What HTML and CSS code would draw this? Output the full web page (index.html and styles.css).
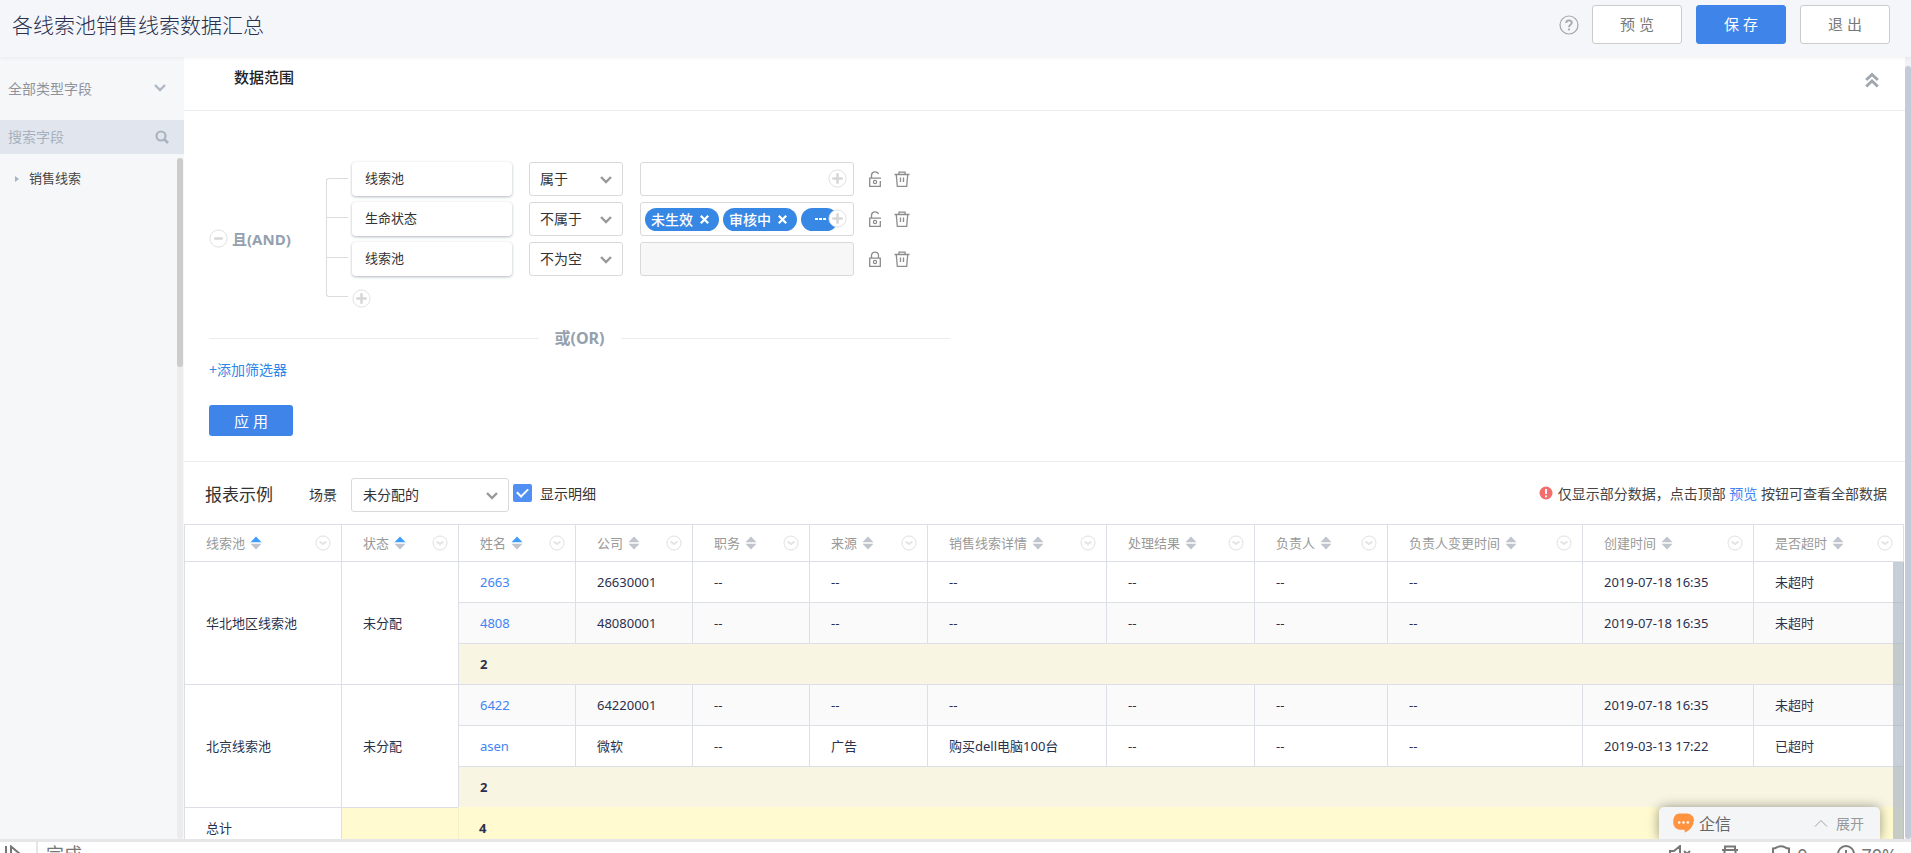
FILE: index.html
```html
<!DOCTYPE html>
<html lang="zh-CN">
<head>
<meta charset="utf-8">
<title>各线索池销售线索数据汇总</title>
<link rel="stylesheet" href="styles.css">
</head>
<body>
<svg class="defs" aria-hidden="true">
  <symbol id="chevron" viewBox="0 0 14 10"><path d="M2 2l5 5 5-5" fill="none" stroke="currentColor" stroke-width="2.400"/></symbol>
  <symbol id="plus" viewBox="0 0 20 20"><circle cx="10" cy="10" r="9" fill="#fff" stroke="#dedede"/><path d="M10 4.500v11M4.500 10h11" stroke="#d6d6d6" stroke-width="2.600"/></symbol>
  <symbol id="minus" viewBox="0 0 20 20"><circle cx="10" cy="10" r="9" fill="#fff" stroke="#dedede"/><path d="M5.500 10h9" stroke="#d6d6d6" stroke-width="2.600"/></symbol>
  <symbol id="unlock" viewBox="0 0 14 16"><path d="M3.500 7V4.500C3.500 0 9.500-.2 10.400 3.200M13 7.200H1.700v8.100H12.300V10" fill="none" stroke="currentColor" stroke-width="1.300"/><circle cx="7" cy="11" r="1.600" fill="none" stroke="currentColor" stroke-width="1.200"/></symbol>
  <symbol id="lock" viewBox="0 0 14 16"><path d="M3.500 7V4.500C3.500 0 10.500 0 10.500 4.500V7M1.700 15.300V7.200h10.600v8.100z" fill="none" stroke="currentColor" stroke-width="1.300"/><circle cx="7" cy="11" r="1.600" fill="none" stroke="currentColor" stroke-width="1.200"/></symbol>
  <symbol id="trash" viewBox="0 0 16 16"><path d="M.5 3.500h15M5 3.300V1.200h6v2.100M2.300 3.700l1 11.600h9.400l1-11.600M6.500 6.500v4.500M9.500 6.500v4.500" fill="none" stroke="currentColor" stroke-width="1.300"/></symbol>
  <symbol id="sort" viewBox="0 0 12 14"><path class="up" d="M6 .5l5.500 5.700H.5z"/><path class="down" d="M6 13.500L.5 7.800h11z"/></symbol>
  <symbol id="drop" viewBox="0 0 16 16"><circle cx="8" cy="8" r="7" fill="none" stroke="#e0e0e0"/><path d="M4.500 6.500L8 9l3.500-2.500" fill="none" stroke="#e4e4e4" stroke-width="2"/></symbol>
</svg>

<header class="topbar">
  <h1 class="title">各线索池销售线索数据汇总</h1>
  <svg class="help" viewBox="0 0 20 20" aria-hidden="true"><circle cx="10" cy="10" r="9" fill="none" stroke="#a6a6a6" stroke-width="1.200"/><path d="M7.200 8c0-3.600 5.600-3.400 5.600-.3 0 2-2.800 2-2.800 4.500" fill="none" stroke="#a6a6a6" stroke-width="1.800"/><circle cx="10" cy="14.500" r="1.100" fill="#a6a6a6"/></svg>
  <button class="btn">预 览</button>
  <button class="btn btn-primary">保 存</button>
  <button class="btn">退 出</button>
</header>

<div class="workspace">
  <aside class="sidebar">
    <button class="type-picker"><span>全部类型字段</span><svg class="chev"><use href="#chevron"/></svg></button>
    <div class="search">
      <input class="search-input" type="text" placeholder="搜索字段" aria-label="搜索字段">
      <svg class="search-icon" viewBox="0 0 14 14" aria-hidden="true"><circle cx="6" cy="6" r="4.500" fill="none" stroke="#a9b4c0" stroke-width="2.200"/><path d="M9.500 9.500L13 13" stroke="#a9b4c0" stroke-width="2.600"/></svg>
    </div>
    <div class="tree">
      <button class="tree-item"><i class="caret"></i>销售线索</button>
      <div class="tree-track"><div class="tree-thumb"></div></div>
    </div>
  </aside>

  <main class="main">
    <section class="range-head">
      <h2 class="range-title">数据范围</h2>
      <button class="collapse" aria-label="收起"><svg viewBox="0 0 14 16"><path d="M1.200 8L7 2.500 12.800 8M1.200 14.500L7 9l5.800 5.500" fill="none" stroke="#9fa8b0" stroke-width="2.900"/></svg></button>
    </section>

    <section class="filters">
      <div class="group">
        <div class="logic"><svg class="round"><use href="#minus"/></svg><span>且(AND)</span></div>
        <div class="bracket"><i class="branch"></i><i class="branch branch-low"></i></div>
        <div class="rules">
          <div class="rule">
            <div class="field">线索池</div>
            <div class="pick op"><select aria-label="条件一"><option>属于</option></select><svg class="chev"><use href="#chevron"/></svg></div>
            <div class="value"><input type="text" aria-label="值一"><button class="add" aria-label="选择"><svg><use href="#plus"/></svg></button></div>
            <button class="tool" aria-label="锁定"><svg class="lock"><use href="#unlock"/></svg></button>
            <button class="tool" aria-label="删除"><svg class="bin"><use href="#trash"/></svg></button>
          </div>
          <div class="rule">
            <div class="field">生命状态</div>
            <div class="pick op"><select aria-label="条件二"><option>不属于</option></select><svg class="chev"><use href="#chevron"/></svg></div>
            <div class="value">
              <span class="tag">未生效<svg class="x" viewBox="0 0 8 8"><path d="M.7.7l6.600 6.600M7.300.7L.7 7.300"/></svg></span>
              <span class="tag">审核中<svg class="x" viewBox="0 0 8 8"><path d="M.7.7l6.600 6.600M7.300.7L.7 7.300"/></svg></span>
              <span class="tag tag-more"><svg class="more" viewBox="0 0 12 4"><path d="M0 1h3v2H0zM4 1h3v2H4zM8 1h3v2H8z" fill="#fff"/></svg></span>
              <button class="add" aria-label="选择"><svg><use href="#plus"/></svg></button>
            </div>
            <button class="tool" aria-label="锁定"><svg class="lock"><use href="#unlock"/></svg></button>
            <button class="tool" aria-label="删除"><svg class="bin"><use href="#trash"/></svg></button>
          </div>
          <div class="rule">
            <div class="field">线索池</div>
            <div class="pick op"><select aria-label="条件三"><option>不为空</option></select><svg class="chev"><use href="#chevron"/></svg></div>
            <div class="value value-off"><input type="text" aria-label="值三" disabled></div>
            <button class="tool" aria-label="解锁"><svg class="lock"><use href="#lock"/></svg></button>
            <button class="tool" aria-label="删除"><svg class="bin"><use href="#trash"/></svg></button>
          </div>
          <button class="add-rule" aria-label="添加条件"><svg><use href="#plus"/></svg></button>
        </div>
      </div>
      <div class="or">或(OR)</div>
      <a class="add-filter" href="#">+添加筛选器</a>
      <button class="apply">应 用</button>
    </section>

    <section class="report-bar">
      <h2 class="report-title">报表示例</h2>
      <label class="scene-label" for="scene">场景</label>
      <div class="pick scene"><select id="scene"><option>未分配的</option></select><svg class="chev"><use href="#chevron"/></svg></div>
      <label class="detail"><input type="checkbox" checked><span>显示明细</span></label>
      <p class="note"><svg viewBox="0 0 14 14" aria-hidden="true"><circle cx="7" cy="7" r="6.500" fill="#f56c6c"/><path d="M7 3v5M7 9.500v1.800" stroke="#fff" stroke-width="1.900"/></svg>仅显示部分数据，点击顶部 <a href="#">预览</a> 按钮可查看全部数据</p>
    </section>

    <div class="table-wrap">
      <table class="grid">
        <colgroup><col class="w157"><col class="w117"><col class="w117"><col class="w117"><col class="w117"><col class="w118"><col class="w179"><col class="w148"><col class="w133"><col class="w195"><col class="w171"><col></colgroup>
        <thead>
          <tr>
            <th><div class="th">线索池<svg class="sort on"><use href="#sort"/></svg><svg class="drop"><use href="#drop"/></svg></div></th>
            <th><div class="th">状态<svg class="sort on"><use href="#sort"/></svg><svg class="drop"><use href="#drop"/></svg></div></th>
            <th><div class="th">姓名<svg class="sort on"><use href="#sort"/></svg><svg class="drop"><use href="#drop"/></svg></div></th>
            <th><div class="th">公司<svg class="sort"><use href="#sort"/></svg><svg class="drop"><use href="#drop"/></svg></div></th>
            <th><div class="th">职务<svg class="sort"><use href="#sort"/></svg><svg class="drop"><use href="#drop"/></svg></div></th>
            <th><div class="th">来源<svg class="sort"><use href="#sort"/></svg><svg class="drop"><use href="#drop"/></svg></div></th>
            <th><div class="th">销售线索详情<svg class="sort"><use href="#sort"/></svg><svg class="drop"><use href="#drop"/></svg></div></th>
            <th><div class="th">处理结果<svg class="sort"><use href="#sort"/></svg><svg class="drop"><use href="#drop"/></svg></div></th>
            <th><div class="th">负责人<svg class="sort"><use href="#sort"/></svg><svg class="drop"><use href="#drop"/></svg></div></th>
            <th><div class="th">负责人变更时间<svg class="sort"><use href="#sort"/></svg><svg class="drop"><use href="#drop"/></svg></div></th>
            <th><div class="th">创建时间<svg class="sort"><use href="#sort"/></svg><svg class="drop"><use href="#drop"/></svg></div></th>
            <th><div class="th">是否超时<svg class="sort"><use href="#sort"/></svg><svg class="drop"><use href="#drop"/></svg></div></th>
          </tr>
        </thead>
        <tbody>
          <tr><td class="pool" rowspan="3">华北地区线索池</td><td class="pool" rowspan="3">未分配</td><td><a href="#">2663</a></td><td>26630001</td><td>--</td><td>--</td><td>--</td><td>--</td><td>--</td><td>--</td><td>2019-07-18 16:35</td><td>未超时</td></tr>
          <tr class="alt"><td><a href="#">4808</a></td><td>48080001</td><td>--</td><td>--</td><td>--</td><td>--</td><td>--</td><td>--</td><td>2019-07-18 16:35</td><td>未超时</td></tr>
          <tr class="subtotal"><td colspan="10">2</td></tr>
          <tr class="alt"><td class="pool" rowspan="3">北京线索池</td><td class="pool" rowspan="3">未分配</td><td><a href="#">6422</a></td><td>64220001</td><td>--</td><td>--</td><td>--</td><td>--</td><td>--</td><td>--</td><td>2019-07-18 16:35</td><td>未超时</td></tr>
          <tr><td><a href="#">asen</a></td><td>微软</td><td>--</td><td>广告</td><td>购买dell电脑100台</td><td>--</td><td>--</td><td>--</td><td>2019-03-13 17:22</td><td>已超时</td></tr>
          <tr class="subtotal"><td colspan="10">2</td></tr>
          <tr class="total"><td class="pool">总计</td><td class="blank"></td><td class="sum" colspan="10">4</td></tr>
        </tbody>
      </table>
      <div class="table-scroll"></div>
    </div>
  </main>
  <div class="page-scroll"><div class="page-thumb"></div></div>

  <button class="chat">
    <svg class="bubble" viewBox="0 0 22 20" aria-hidden="true"><path d="M7 0h8a7 7 0 0 1 6.500 9.200C20.500 14 18 17.500 12.500 20l-.5-3H7A7 7 0 0 1 .3 9.500C0 4 2.500 0 7 0z" fill="#ff9340"/><circle cx="6.500" cy="9.500" r="1.300" fill="#fff"/><circle cx="11" cy="9.500" r="1.300" fill="#fff"/><circle cx="15.500" cy="9.500" r="1.300" fill="#fff"/></svg>
    <span class="chat-name">企信</span>
    <svg class="chat-arrow" viewBox="0 0 14 8" aria-hidden="true"><path d="M1 7.500l6-6 6 6" fill="none" stroke="#a0a0a0"/></svg>
    <span>展开</span>
  </button>
</div>

<footer class="status">
  <svg class="s-play" viewBox="0 0 16 18" aria-hidden="true"><path d="M1 1v16M6 1.500v15L15 9z" fill="none" stroke="#777" stroke-width="2"/></svg>
  <span class="s-text">完成</span>
  <svg class="s-sound" viewBox="0 0 24 18" aria-hidden="true"><path d="M1 6h4l6-5v16l-6-5H1zM15 6l6 6M21 6l-6 6" fill="none" stroke="#777" stroke-width="2"/></svg>
  <svg class="s-bin" viewBox="0 0 18 18" aria-hidden="true"><path d="M1 5h16M4 5V1.500h10V5M3.500 5v12h11V5" fill="none" stroke="#777" stroke-width="2"/></svg>
  <svg class="s-shield" viewBox="0 0 18 18" aria-hidden="true"><path d="M1 3.500c4-.3 4-2.300 8-2.300s4 2 8 2.300v6.500c0 4-5 6-8 7-3-1-8-3-8-7z" fill="none" stroke="#777" stroke-width="2"/></svg>
  <span class="s-num">0</span>
  <svg class="s-zoom" viewBox="0 0 20 18" aria-hidden="true"><circle cx="9" cy="9" r="8" fill="none" stroke="#777" stroke-width="2"/><path d="M9 5v8M5 9h8" stroke="#777" stroke-width="2"/></svg>
  <span class="s-num">70%</span>
</footer>
</body>
</html>
```

FILE: styles.css
```css
* { box-sizing: border-box; }
body {
  margin: 0;
  height: 100vh;
  display: flex;
  flex-direction: column;
  overflow: hidden;
  background: #fff;
  color: #333;
  font-family: "Noto Sans", "Noto Sans CJK SC", sans-serif;
  font-size: 14px;
  font-weight: 400;
}
h1, h2, p { margin: 0; }
button, input, select { font: inherit; color: inherit; margin: 0; }
button { border: 0; padding: 0; background: none; cursor: pointer; }
a { color: #3e84e9; text-decoration: none; }
svg { display: block; flex: none; }
.defs { position: absolute; width: 0; height: 0; }

.topbar {
  flex: none;
  display: flex;
  align-items: flex-start;
  height: 57px;
  padding: 5px 21px 0 12px;
  background: #f4f6fa;
  box-shadow: 0 1px 4px rgba(0, 0, 0, .06);
  position: relative;
  z-index: 1;
}
.title { flex: 1; font-size: 21px; line-height: 40px; font-weight: 300; color: #2a304d; }
.help { width: 20px; height: 20px; margin: 10px 13px 0 0; }
.btn {
  width: 90px;
  height: 39px;
  padding-bottom: 2px;
  border: 1px solid #ccc;
  border-radius: 3px;
  background: #fff;
  color: #777;
  font-size: 15px;
}
.btn + .btn { margin-left: 14px; }
.btn-primary, .apply { background: #3e84e9; border-color: #3e84e9; color: #fff; }

.workspace { flex: 1; min-height: 0; display: flex; position: relative; overflow: hidden; }

.sidebar { flex: none; width: 184px; display: flex; flex-direction: column; background: #f6f7f9; }
.type-picker {
  display: flex;
  align-items: center;
  justify-content: space-between;
  height: 63px;
  padding: 0 17px 2px 8px;
  color: #8f949c;
}
.chev { width: 14px; height: 10px; color: #999; }
.type-picker .chev { color: #aeb8c2; }
.search { display: flex; align-items: center; height: 34px; padding: 0 15px 0 8px; background: #e1e6ee; }
.search-input { flex: 1; min-width: 0; border: 0; padding: 0 0 1px; background: none; outline: 0; }
.search-input::placeholder { color: #a6b1bd; }
.search-icon { width: 14px; height: 14px; }
.tree { flex: 1; position: relative; padding-top: 11px; }
.tree-item { display: flex; align-items: center; height: 24px; padding-left: 15px; font-size: 13px; color: #444; }
.caret { margin: 3px 10px 0 0; border: 3px solid transparent; border-left: 4px solid #a9b4c0; border-right: 0; }
.tree-track { position: absolute; top: 4px; right: 1px; bottom: 0; width: 6px; border-radius: 3px; background: #ececec; }
.tree-thumb { height: 209px; border-radius: 3px; background: #ccc; }

.main { flex: 1; min-width: 0; display: flex; flex-direction: column; }
.range-head {
  flex: none;
  display: flex;
  justify-content: space-between;
  align-items: flex-start;
  height: 54px;
  padding: 9px 26px 0 50px;
  border-bottom: 1px solid #eaecee;
}
.range-title { font-size: 15px; line-height: 22px; font-weight: 500; color: #222; }
.collapse { margin-top: 6px; }
.collapse svg { width: 14px; height: 16px; }

.filters {
  flex: none;
  display: flex;
  flex-direction: column;
  align-items: flex-start;
  padding: 51px 25px 25px;
  border-bottom: 1px solid #eaecee;
}
.group { display: flex; padding-bottom: 10px; }
.logic {
  display: flex;
  align-items: center;
  gap: 4px;
  width: 117px;
  padding-top: 7px;
  color: #94a0ae;
  font-size: 15px;
  font-weight: 700;
}
.round, .add svg, .add-rule svg { width: 19px; height: 19px; }
.bracket {
  width: 22px;
  height: 119px;
  margin: 16px 4px 0 0;
  border: 1px solid #dcdcdc;
  border-right: 0;
  border-radius: 3px 0 0 3px;
}
.branch { display: block; height: 39px; border-bottom: 1px solid #dcdcdc; }
.branch-low { height: 40px; }
.rules { display: flex; flex-direction: column; align-items: flex-start; gap: 6px; }
.rule { display: flex; align-items: center; height: 34px; }
.field {
  width: 160px;
  height: 34px;
  padding-left: 13px;
  border-radius: 4px;
  line-height: 32px;
  font-size: 13px;
  box-shadow: 0 1px 3px rgba(60, 80, 100, .4);
}
.pick { position: relative; height: 34px; }
.pick select {
  width: 100%;
  height: 100%;
  padding: 0 10px 1px;
  border: 1px solid #d9d9d9;
  border-radius: 3px;
  background: #fff;
  appearance: none;
}
.pick .chev { position: absolute; top: 13px; right: 10px; pointer-events: none; }
.op { width: 94px; margin-left: 17px; }
.value {
  position: relative;
  display: flex;
  align-items: center;
  gap: 4px;
  width: 214px;
  height: 34px;
  margin: 0 14px 0 17px;
  padding: 0 4px;
  border: 1px solid #d9d9d9;
  border-radius: 3px;
}
.value input { width: 100%; border: 0; padding: 0; background: none; outline: 0; }
.value-off { background: #f7f7f7; }
.add { position: absolute; top: 6px; right: 6px; }
.tag {
  display: flex;
  align-items: center;
  gap: 7px;
  height: 23px;
  padding: 0 10px 0 6px;
  border-radius: 12px;
  background: #3787e4;
  color: #fff;
  font-weight: 500;
  line-height: 23px;
}
.tag-more { padding: 0 11px 0 14px; }
.x { width: 9px; height: 9px; fill: none; stroke: #fff; stroke-width: 2; }
.more { width: 12px; height: 4px; }
.tool { width: 16px; color: #8c8c8c; }
.tool + .tool { margin-left: 10px; }
.lock { width: 14px; height: 16px; }
.bin { width: 16px; height: 16px; }
.add-rule { margin-top: 7px; }
.or {
  display: flex;
  align-items: center;
  gap: 16px;
  width: 741px;
  margin-top: 9px;
  color: #94a0ae;
  font-size: 16px;
  line-height: 22px;
  font-weight: 700;
}
.or::before, .or::after { content: ""; flex: 1; height: 1px; background: #ebecee; }
.add-filter { margin-top: 10px; line-height: 22px; color: #2f87e8; }
.apply { width: 84px; height: 31px; margin-top: 24px; border-radius: 3px; font-size: 15px; }

.report-bar { flex: none; display: flex; align-items: center; height: 62px; padding: 3px 18px 0 21px; }
.report-title { width: 104px; padding-bottom: 2px; font-size: 17px; font-weight: 400; }
.scene-label { width: 42px; padding-bottom: 2px; }
.scene { width: 158px; margin-right: 4px; }
.scene select { padding-left: 11px; }
.detail { display: flex; align-items: center; gap: 8px; margin-bottom: 4px; }
.detail input {
  appearance: none;
  width: 19px;
  height: 18px;
  border-radius: 2px;
  background: #4f90f2;
  display: grid;
  place-items: center;
}
.detail input::before {
  content: "";
  width: 9px;
  height: 5px;
  margin-bottom: 3px;
  border: solid #fff;
  border-width: 0 0 2px 2px;
  rotate: -45deg;
}
.note { display: flex; align-items: center; margin-left: auto; padding-bottom: 3px; white-space: pre; color: #444; }
.note svg { width: 14px; height: 14px; margin-right: 5px; }
.note a { color: #4285f4; }

.table-wrap { flex: 1; min-height: 0; position: relative; overflow: hidden; padding-right: 1px; }
.grid {
  width: 100%;
  table-layout: fixed;
  border-collapse: separate;
  border-spacing: 0;
  border-right: 1px solid #dcdfe6;
  font-size: 13px;
  color: #2a304d;
}
.w117 { width: 117px; }
.w118 { width: 118px; }
.w133 { width: 133px; }
.w148 { width: 148px; }
.w157 { width: 157px; }
.w171 { width: 171px; }
.w179 { width: 179px; }
.w195 { width: 195px; }
.grid th, .grid td {
  height: 41px;
  padding: 0 0 0 21px;
  border: solid #dcdfe6;
  border-width: 1px 0 0 1px;
  text-align: left;
  line-height: 20px;
  white-space: nowrap;
}
.grid th { height: 37px; font-weight: 400; color: #999; }
.th { display: flex; align-items: center; padding-right: 10px; }
.sort { width: 12px; height: 14px; margin-left: 5px; fill: #c0c4cc; --up: #c0c4cc; }
.sort.on { --up: #409eff; }
.up { fill: var(--up); }
.drop { width: 16px; height: 16px; margin-left: auto; }
.grid a { color: #4285f4; }
.alt td { background: #fafafa; }
.alt td.pool, td.pool { background: #fff; }
.grid .subtotal td { background: #f8f5e2; font-weight: 700; }
.total td { background: #fffad0; }
.grid .total td.pool { background: #fff; }
.grid .total td.sum { border-top-color: #fffad0; border-left-color: #f5f0c8; font-weight: 700; padding-left: 20px; }
.table-scroll { position: absolute; top: 38px; right: 1px; bottom: 0; width: 11px; background: rgba(160, 174, 190, .6); }
.page-scroll { flex: none; width: 6px; padding-top: 9px; background: #f1f2f5; }
.page-thumb { height: 100%; border-radius: 3px; background: #c3cad9; }

.chat {
  position: absolute;
  right: 31px;
  bottom: 0;
  display: flex;
  align-items: center;
  width: 221px;
  height: 32px;
  padding: 0 16px 1px 14px;
  border-radius: 5px 5px 0 0;
  background: #f4f5f7;
  color: #999;
  box-shadow: 0 0 12px rgba(0, 0, 0, .4);
}
.bubble { width: 21px; height: 20px; margin-right: 5px; }
.chat-name { font-size: 16px; color: #666; }
.chat-arrow { width: 14px; height: 8px; margin: 0 8px 0 auto; }

.status {
  flex: none;
  display: flex;
  align-items: flex-start;
  height: 14px;
  padding: 3px 14px 0 5px;
  overflow: hidden;
  border-top: 3px solid #e6e6e8;
  background: #fff;
  color: #777;
  font-size: 18px;
  line-height: 20px;
}
.status svg { height: 18px; }
.s-play { width: 16px; }
.s-text {
  flex: 1;
  margin: -3px 0 0 15px;
  padding: 2px 0 0 8px;
  border-left: 2px solid #e6e6e8;
}
.s-sound { width: 24px; margin-right: 28px; }
.s-bin { width: 18px; margin-right: 33px; }
.s-shield { width: 18px; margin-right: 7px; }
.s-zoom { width: 20px; margin: 0 4px 0 30px; }
```
